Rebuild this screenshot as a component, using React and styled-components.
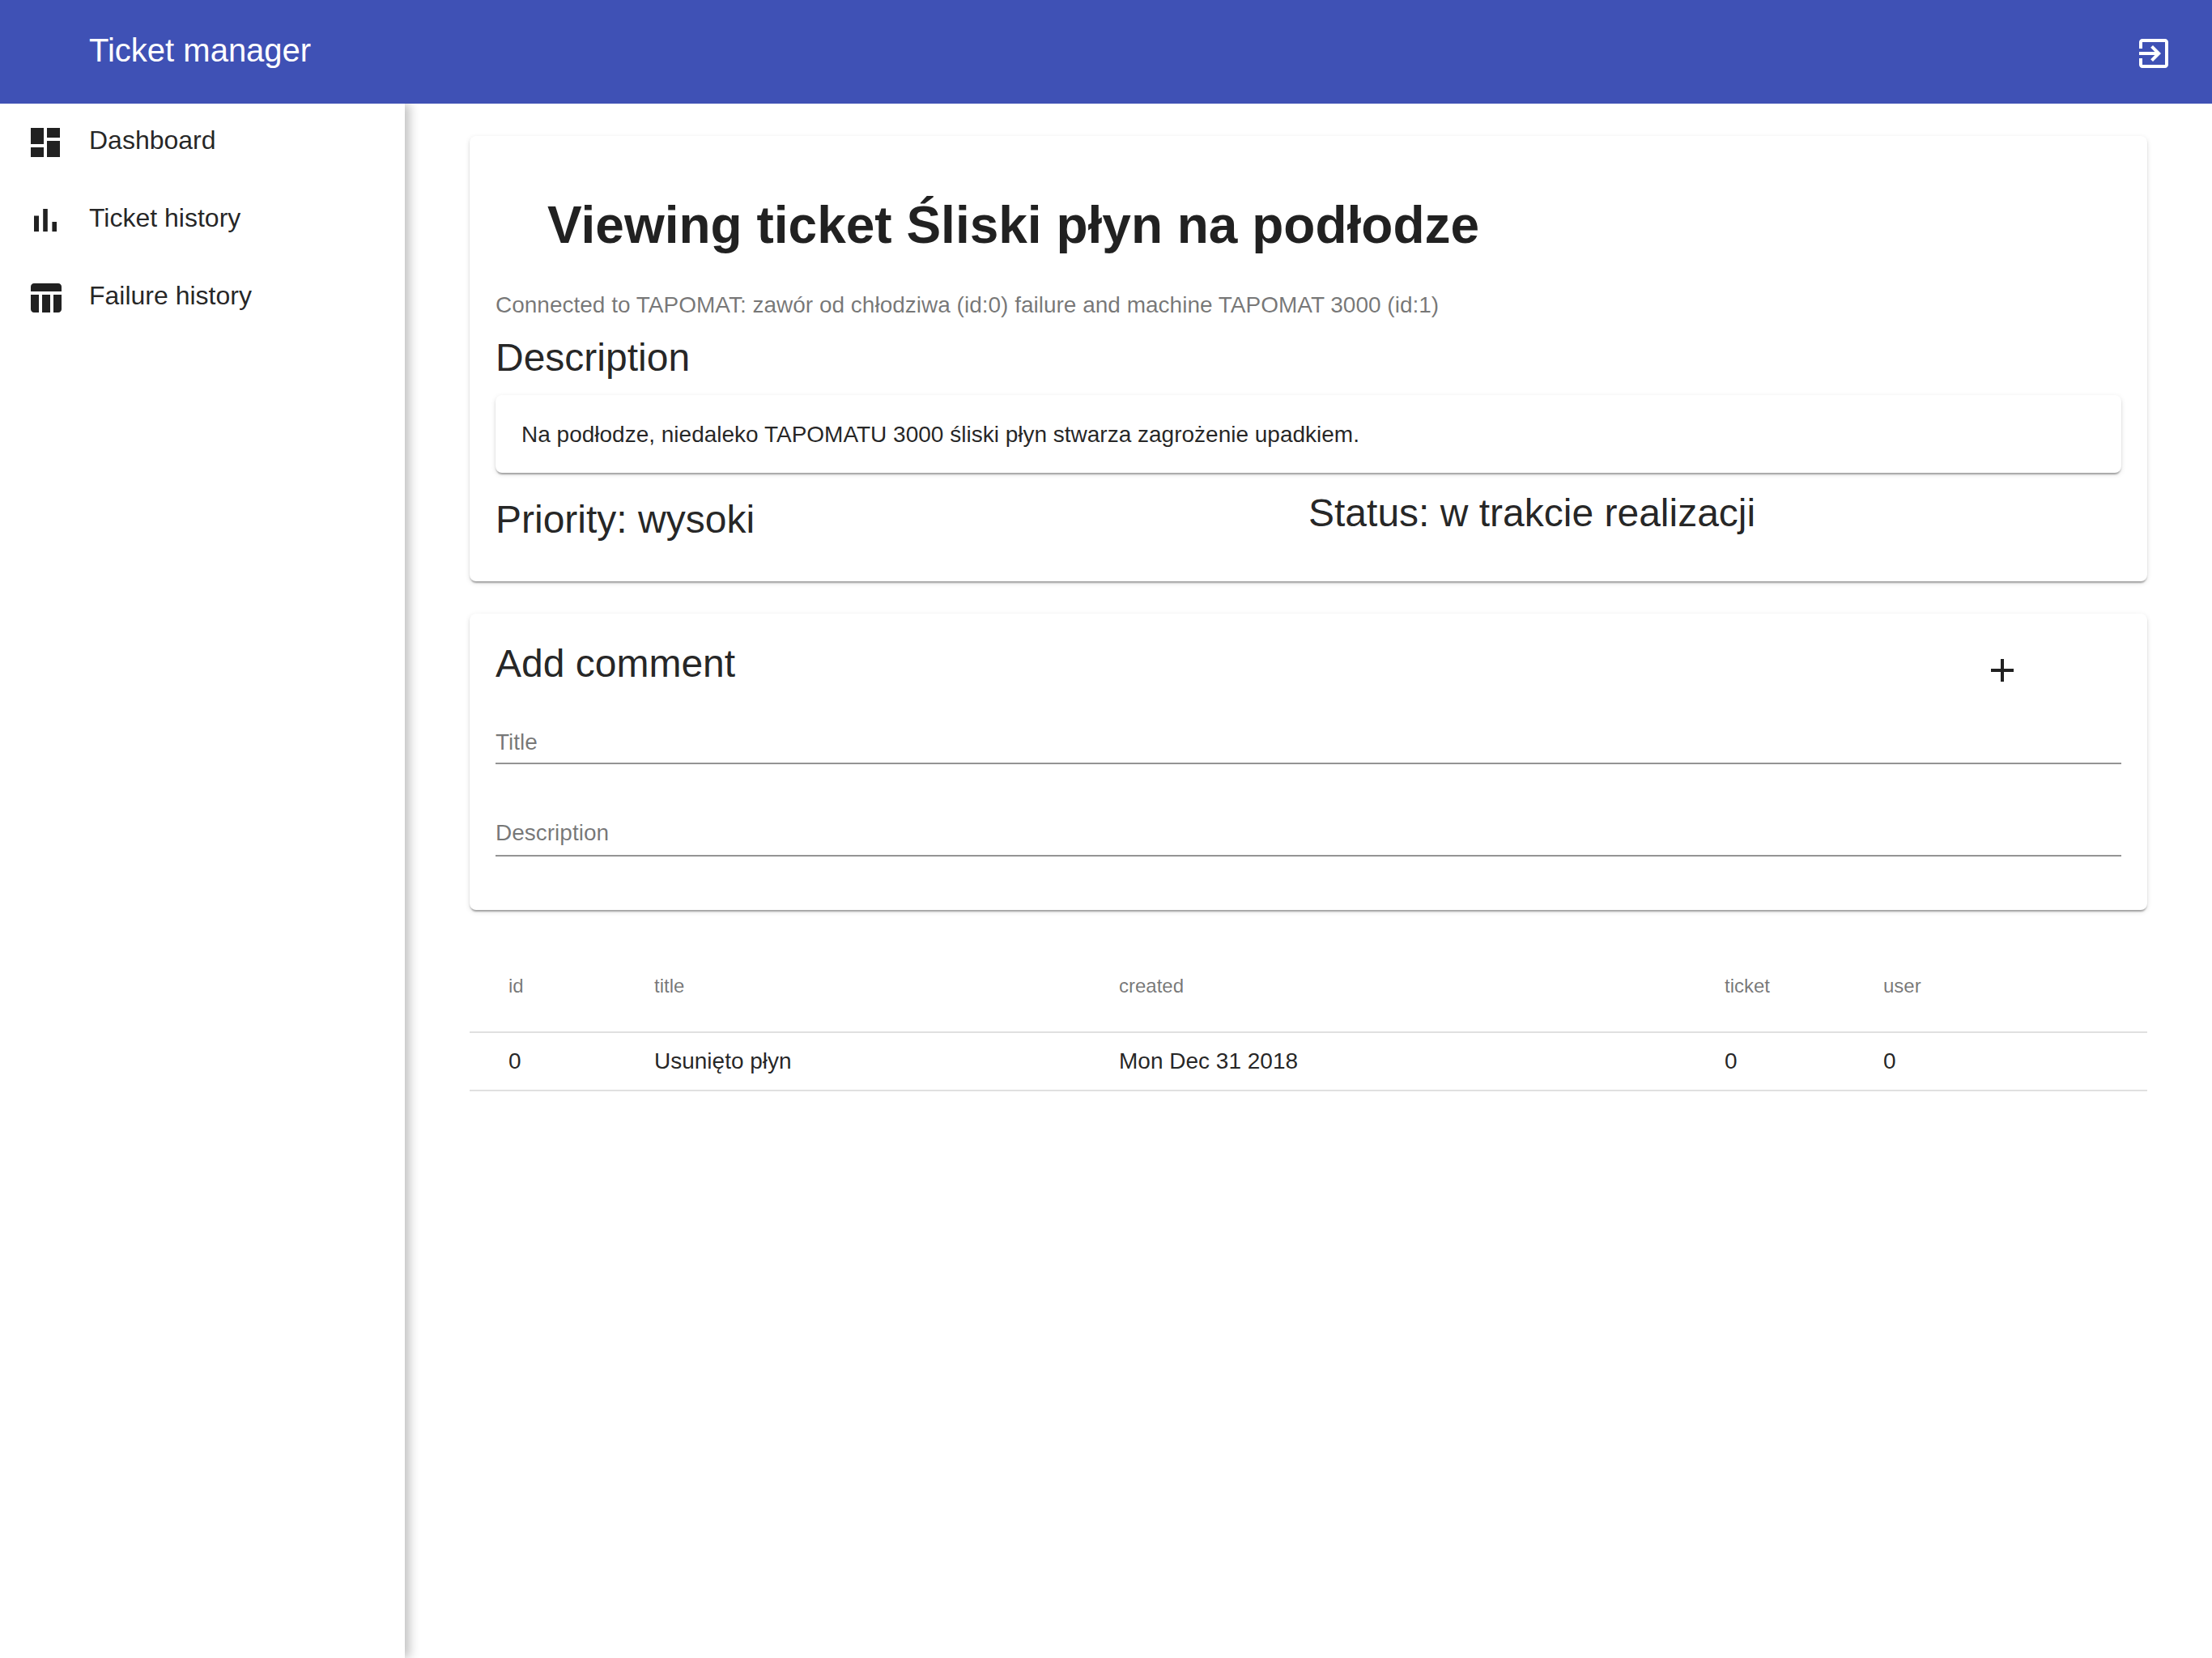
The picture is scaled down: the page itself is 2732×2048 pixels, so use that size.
import React from "react";
import styled, { createGlobalStyle } from "styled-components";

const ink = "rgba(0, 0, 0, 0.87)";
const muted = "rgba(0, 0, 0, 0.54)";

const GlobalStyle = createGlobalStyle`
  * {
    box-sizing: border-box;
  }

  body {
    margin: 0;
    background: #fff;
    color: ${ink};
    font-family: "Liberation Sans", Arial, sans-serif;
    font-size: 28px;
    line-height: 32px;
  }
`;

const Page = styled.div`
  display: flex;
  flex-direction: column;
  min-height: 100vh;
`;

const Toolbar = styled.header`
  position: relative;
  z-index: 2;
  display: flex;
  align-items: center;
  justify-content: space-between;
  height: 128px;
  padding: 0 32px 0 110px;
  background: #3f51b5;
  color: #fff;
`;

const AppName = styled.span`
  padding-bottom: 4px;
  font-size: 40px;
  line-height: 48px;
`;

const IconButton = styled.button`
  display: flex;
  align-items: center;
  justify-content: center;
  padding: 0;
  border: 0;
  background: transparent;
  color: inherit;
  cursor: pointer;
`;

const LogoutButton = styled(IconButton)`
  width: 80px;
  height: 80px;
  margin-top: 4px;
`;

const Glyph = styled.svg`
  display: block;
  flex: none;
  width: 48px;
  height: 48px;
  fill: currentColor;
`;

const Body = styled.div`
  display: flex;
  flex: 1;
`;

const Sidebar = styled.nav`
  flex: none;
  width: 500px;
  background: #fff;
  box-shadow: 6px 0 12px rgba(0, 0, 0, 0.24);
`;

const NavLink = styled.a`
  display: flex;
  align-items: center;
  gap: 30px;
  height: 96px;
  padding: 0 32px;
  color: inherit;
  text-decoration: none;
`;

const NavText = styled.span`
  padding-bottom: 6px;
  font-size: 32px;
  line-height: 36px;
`;

const Main = styled.main`
  display: flex;
  flex: 1;
  flex-direction: column;
  gap: 40px;
  min-width: 0;
  padding: 40px 80px;
`;

const Card = styled.section`
  padding: 32px;
  border-radius: 8px;
  background: #fff;
  box-shadow:
    0 4px 2px -2px rgba(0, 0, 0, 0.2),
    0 2px 2px 0 rgba(0, 0, 0, 0.14),
    0 2px 6px 0 rgba(0, 0, 0, 0.12);
`;

const Note = styled(Card)`
  padding: 33px 32px 31px;
`;

const PageTitle = styled.h1`
  margin: 46px 64px 51px;
  font-size: 64px;
  line-height: 64px;
`;

const Subtitle = styled.p`
  margin: 0;
  color: ${muted};
`;

const Heading = styled.h2`
  margin: 0;
  font-size: 48px;
  font-weight: 400;
  line-height: 48px;
`;

const DescriptionHeading = styled(Heading)`
  margin: 25px 0 22px;
`;

const Facts = styled.div`
  display: grid;
  grid-template-columns: 1fr 1fr;
  padding: 26px 0 20px;
`;

const Priority = styled(Heading)`
  padding-top: 8px;
`;

const CommentHeader = styled.div`
  display: flex;
  align-items: flex-start;
  justify-content: space-between;
`;

const CommentHeading = styled(Heading)`
  padding-top: 6px;
`;

const AddButton = styled(IconButton)`
  width: 76px;
  height: 76px;
  margin-right: 109px;
`;

const Field = styled.div`
  display: grid;
  margin-bottom: 34px;
  padding: 35px 0 ${(p) => p.$gap}px;
  border-bottom: 2px solid rgba(0, 0, 0, 0.42);
`;

const FieldInput = styled.input`
  grid-area: 1 / 1;
  width: 100%;
  height: 32px;
  padding: 0;
  border: 0;
  outline: 0;
  background: transparent;
  color: ${ink};
  font: inherit;
`;

const FieldLabel = styled.label`
  grid-area: 1 / 1;
  color: ${muted};
  pointer-events: none;

  ${FieldInput}:not(:placeholder-shown) + & {
    visibility: hidden;
  }
`;

const Comments = styled.table`
  width: 100%;
  border-spacing: 0;
  table-layout: fixed;
`;

const Column = styled.col`
  width: ${(p) => p.$width}px;
`;

const cell = `
  padding: 0;
  border-bottom: 2px solid rgba(0, 0, 0, 0.12);
  text-align: left;
  vertical-align: middle;

  &:first-child {
    padding-left: 48px;
  }

  &:last-child {
    padding-right: 48px;
  }
`;

const HeaderCell = styled.th`
  ${cell}
  height: 112px;
  padding-bottom: 2px;
  color: ${muted};
  font-size: 24px;
  font-weight: 400;
  line-height: 28px;
`;

const Cell = styled.td`
  ${cell}
  height: 72px;
`;

const paths = {
  dashboard: "M3 13h8V3H3v10zm0 8h8v-6H3v6zm10 0h8V11h-8v10zm0-18v6h8V3h-8z",
  bars: "M5 9.2h3V19H5zM10.6 5h2.8v14h-2.8zm5.6 8H19v6h-2.8z",
  table:
    "M10 10.02h5V21h-5zM17 21h3c1.1 0 2-.9 2-2v-9h-5v11zm3-18H5c-1.1 0-2 .9-2 2v3h19V5c0-1.1-.9-2-2-2zM3 19c0 1.1.9 2 2 2h3V10H3v9z",
  exit: "M10.09 15.59L11.5 17l5-5-5-5-1.41 1.41L12.67 11H3v2h9.67l-2.58 2.59zM19 3H5c-1.11 0-2 .9-2 2v4h2V5h14v14H5v-4H3v4c0 1.1.89 2 2 2h14c1.1 0 2-.9 2-2V5c0-1.1-.9-2-2-2z",
  add: "M19 13h-6v6h-2v-6H5v-2h6V5h2v6h6v2z",
};

const Icon = ({ name }) => (
  <Glyph viewBox="0 0 24 24" aria-hidden="true">
    <path d={paths[name]} />
  </Glyph>
);

const links = [
  { icon: "dashboard", text: "Dashboard", href: "#dashboard" },
  { icon: "bars", text: "Ticket history", href: "#tickets" },
  { icon: "table", text: "Failure history", href: "#failures" },
];

// Widths are proportions: the fixed table layout shares out the spare room by them.
const columns = [
  { name: "id", width: 114 },
  { name: "title", width: 287 },
  { name: "created", width: 374 },
  { name: "ticket", width: 98 },
  { name: "user", width: 163 },
];

const comments = [
  { id: 0, title: "Usunięto płyn", created: "Mon Dec 31 2018", ticket: 0, user: 0 },
];

const TextField = ({ id, label, gap }) => (
  <Field $gap={gap}>
    <FieldInput id={id} type="text" placeholder=" " />
    <FieldLabel htmlFor={id}>{label}</FieldLabel>
  </Field>
);

export default function App() {
  return (
    <Page>
      <GlobalStyle />
      <Toolbar>
        <AppName>Ticket manager</AppName>
        <LogoutButton type="button" aria-label="Log out">
          <Icon name="exit" />
        </LogoutButton>
      </Toolbar>
      <Body>
        <Sidebar>
          {links.map((link) => (
            <NavLink key={link.text} href={link.href}>
              <Icon name={link.icon} />
              <NavText>{link.text}</NavText>
            </NavLink>
          ))}
        </Sidebar>
        <Main>
          <Card>
            <PageTitle>Viewing ticket Śliski płyn na podłodze</PageTitle>
            <Subtitle>
              Connected to TAPOMAT: zawór od chłodziwa (id:0) failure and machine TAPOMAT 3000 (id:1)
            </Subtitle>
            <DescriptionHeading>Description</DescriptionHeading>
            <Note as="div">
              Na podłodze, niedaleko TAPOMATU 3000 śliski płyn stwarza zagrożenie upadkiem.
            </Note>
            <Facts>
              <Priority>Priority: wysoki</Priority>
              <Heading>Status: w trakcie realizacji</Heading>
            </Facts>
          </Card>
          <Card>
            <CommentHeader>
              <CommentHeading>Add comment</CommentHeading>
              <AddButton type="button" aria-label="Add comment">
                <Icon name="add" />
              </AddButton>
            </CommentHeader>
            <TextField id="comment-title" label="Title" gap={9} />
            <TextField id="comment-description" label="Description" gap={11} />
          </Card>
          <Comments>
            <colgroup>
              {columns.map((column) => (
                <Column key={column.name} $width={column.width} />
              ))}
            </colgroup>
            <thead>
              <tr>
                {columns.map(({ name }) => (
                  <HeaderCell key={name} scope="col">
                    {name}
                  </HeaderCell>
                ))}
              </tr>
            </thead>
            <tbody>
              {comments.map((comment) => (
                <tr key={comment.id}>
                  {columns.map(({ name }) => (
                    <Cell key={name}>{comment[name]}</Cell>
                  ))}
                </tr>
              ))}
            </tbody>
          </Comments>
        </Main>
      </Body>
    </Page>
  );
}
